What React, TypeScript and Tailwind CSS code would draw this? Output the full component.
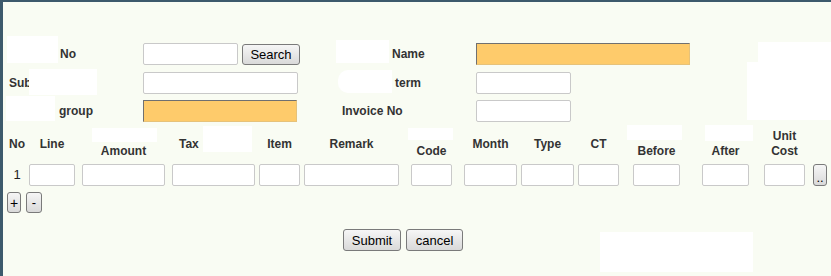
const inputCls = "h-[22px] bg-white border border-[#c9c9c9] rounded-[2px]";
const orangeCls = "h-[22px] bg-[#fecb6b] border border-t-[#707070] border-l-[#707070] border-b-[#e6c27a] border-r-[#e6c27a]";
const btnCls =
  "border border-[#7a7a7a] rounded-[3px] bg-gradient-to-b from-[#f6f6f6] to-[#d9d9d9] text-[13px] text-black leading-none";

const columns = [
  { key: "line", head: "Line", cls: "w-[46px] ml-[4px]" },
  { key: "amount", head: "\u00a0\nAmount", cls: "w-[83px] ml-[7px]" },
  { key: "tax", head: "Tax", cls: "w-[83px] ml-[7px]", left: true },
  { key: "item", head: "Item", cls: "w-[41px] ml-[4px]" },
  { key: "remark", head: "Remark", cls: "w-[95px] ml-[4px]" },
  { key: "code", head: "\u00a0\nCode", cls: "w-[41px] ml-[12px]" },
  { key: "month", head: "Month", cls: "w-[53px] ml-[12px]" },
  { key: "type", head: "Type", cls: "w-[53px] ml-[4px]" },
  { key: "ct", head: "CT", cls: "w-[41px] ml-[4px]" },
  { key: "before", head: "\u00a0\nBefore", cls: "w-[47px] ml-[14px]" },
  { key: "after", head: "\u00a0\nAfter", cls: "w-[47px] ml-[22px]" },
  { key: "unit", head: "Unit\nCost", cls: "w-[41px] ml-[15px]" },
];

// white masks over hidden text in the screenshot
const masks = [
  "left-[7px] top-[36px] w-[51px] h-[27px]",
  "left-[29px] top-[69px] w-[68px] h-[26px]",
  "left-[6px] top-[96px] w-[49px] h-[25px]",
  "left-[336px] top-[40px] w-[53px] h-[23px]",
  "left-[338px] top-[70px] w-[54px] h-[23px] rounded-l-[10px]",
  "left-[758px] top-[42px] w-[73px] h-[20px]",
  "left-[747px] top-[62px] w-[84px] h-[58px]",
  "left-[92px] top-[128px] w-[65px] h-[14px]",
  "left-[203px] top-[126px] w-[49px] h-[26px]",
  "left-[408px] top-[128px] w-[45px] h-[12px]",
  "left-[627px] top-[125px] w-[55px] h-[15px]",
  "left-[705px] top-[125px] w-[48px] h-[16px]",
  "left-[600px] top-[232px] w-[153px] h-[40px]",
];

export default function App() {
  return (
    <div className="relative w-[831px] h-[276px] overflow-hidden font-['Liberation_Sans',Arial,sans-serif]">
      <div className="w-full h-full border-l-[3px] border-t-[2px] border-[#3d5a6c] bg-[#f9fcf3] pt-[41px] text-[12px] font-bold text-[#333]">
        <div className="grid grid-cols-[134px_199px_134px_auto] gap-y-[6.5px] pl-[6px] items-center">
          <div className="pl-[51px]">No</div>
          <div className="flex items-center gap-[4px]">
            <input className={`${inputCls} w-[95px]`} />
            <button className={`${btnCls} w-[58px] h-[21px] font-normal`}>Search</button>
          </div>
          <div className="pl-[50px]">Name</div>
          <div>
            <input className={`${orangeCls} w-[214px]`} />
          </div>

          <div>Sub</div>
          <div>
            <input className={`${inputCls} w-[155px]`} />
          </div>
          <div className="pl-[53px]">term</div>
          <div>
            <input className={`${inputCls} w-[95px]`} />
          </div>

          <div className="pl-[50px]">group</div>
          <div>
            <input className={`${orangeCls} w-[154px]`} />
          </div>
          <div>Invoice No</div>
          <div>
            <input className={`${inputCls} w-[95px]`} />
          </div>
        </div>

        <div className="mt-[4px] pl-[6px]">
          <div className="flex h-[36px] items-center leading-[15px]">
            <div className="w-[16px] text-center">No</div>
            {columns.map((c) => (
              <div
                key={c.key}
                className={`${c.cls} shrink-0 whitespace-pre ${c.left ? "text-left pl-[7px]" : "text-center"}`}
              >
                {c.head}
              </div>
            ))}
          </div>
          <div className="flex items-center mt-[2px]">
            <div className="w-[16px] text-center font-normal text-[13px] text-[#222]">1</div>
            {columns.map((c) => (
              <input key={c.key} className={`${inputCls} ${c.cls} shrink-0`} />
            ))}
            <button className={`${btnCls} ml-[8px] w-[14px] h-[22px] text-[10px] font-normal pt-[4px]`}>..</button>
          </div>
          <div className="flex gap-[5px] mt-[6px] -ml-[2px]">
            <button className={`${btnCls} w-[14px] h-[21px] text-[14px] font-normal`}>+</button>
            <button className={`${btnCls} w-[16px] h-[21px] text-[13px] font-normal`}>-</button>
          </div>
        </div>

        <div className="flex gap-[5px] pl-[340px] mt-[16px]">
          <button className={`${btnCls} w-[58px] h-[22px] font-normal`}>Submit</button>
          <button className={`${btnCls} w-[57px] h-[22px] font-normal`}>cancel</button>
        </div>
      </div>
      {masks.map((m) => (
        <div key={m} className={`absolute bg-white ${m}`} />
      ))}
    </div>
  );
}
